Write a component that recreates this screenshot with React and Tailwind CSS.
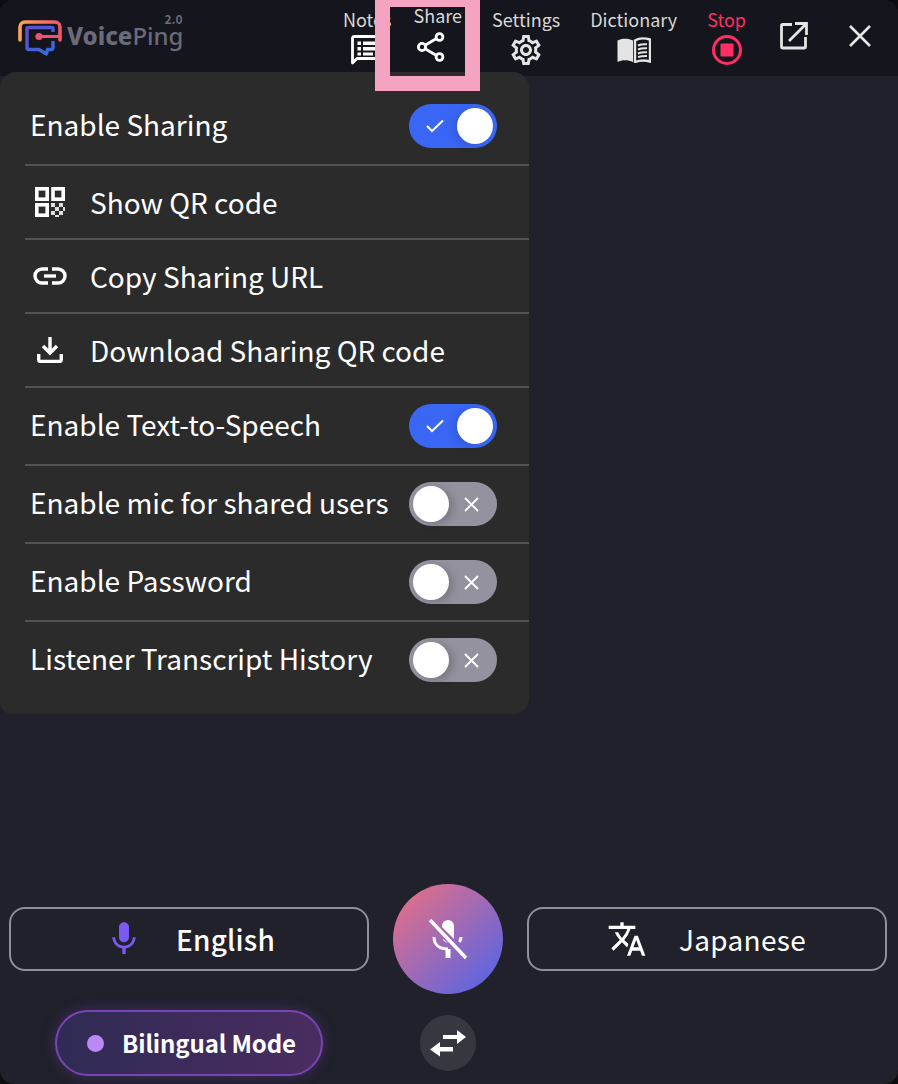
import React from "react";
import { MdOutlineSettings, MdTranslate, MdMic } from "react-icons/md";

const font = { fontFamily: '"Noto Sans CJK JP", "Noto Sans", sans-serif' };

function Logo() {
  return (
    <svg width="44" height="36" viewBox="0 0 44 36" fill="none">
      <defs>
        <linearGradient id="lg1" x1="0" y1="0" x2="44" y2="0" gradientUnits="userSpaceOnUse">
          <stop offset="0" stopColor="#fba94c" />
          <stop offset="1" stopColor="#f4506f" />
        </linearGradient>
        <linearGradient id="lg2" x1="6" y1="6" x2="30" y2="36" gradientUnits="userSpaceOnUse">
          <stop offset="0" stopColor="#6a48c8" />
          <stop offset="1" stopColor="#2f6fe0" />
        </linearGradient>
      </defs>
      <path d="M2 20V7a5 5 0 0 1 5-5h30a5 5 0 0 1 5 5v13" stroke="url(#lg1)" strokeWidth="3.600" strokeLinecap="round" />
      <path d="M35 21v7a1.500 1.500 0 0 1-1.500 1.500H29.500L28.500 34 21 29.500H10.500A1.500 1.500 0 0 1 9 28V9a1.500 1.500 0 0 1 1.500-1.500h23A1.500 1.500 0 0 1 35 9v3" stroke="url(#lg2)" strokeWidth="3.400" strokeLinejoin="round" />
      <path d="M22 16.500h20" stroke="#f4506f" strokeWidth="3.200" strokeLinecap="round" />
      <circle cx="21" cy="16.500" r="3.600" fill="#f4506f" />
    </svg>
  );
}

function NotesIcon() {
  return (
    <svg width="32" height="30" viewBox="0 0 32 30" fill="none">
      <path d="M1.500 28V3a1.500 1.500 0 0 1 1.500-1.500h27A1.500 1.500 0 0 1 31 3v19a1.500 1.500 0 0 1-1.500 1.500H6Z" stroke="#fff" strokeWidth="2.800" strokeLinejoin="round" />
      <path d="M6.500 6.500h3.500v3.500h-3.500zM6.500 12h3.500v3.500h-3.500zM6.500 17.500h3.500v3h-3.500zM12 6.500h14.500v3.500H12zM12 12h14.500v3.500H12zM12 17.500h10v3H12z" fill="#fff" />
    </svg>
  );
}

function ShareIcon() {
  return (
    <svg width="30" height="30" viewBox="0 0 30 30" fill="none" stroke="#fff" strokeWidth="2.800">
      <path d="M9.500 13 20.500 6.500M9.500 17 20.500 23.500" />
      <circle cx="6" cy="15" r="3.600" />
      <circle cx="23.500" cy="5" r="3.400" />
      <circle cx="23.500" cy="25" r="3.400" />
    </svg>
  );
}

function BookIcon() {
  return (
    <svg width="34" height="26" viewBox="0 0 34 26" fill="none">
      <path d="M0.500 3.500C5 1 11 1 16 3.500V25C11 22.500 5 22.500 0.500 25Z" fill="#e4e4e4" />
      <path d="M18 3.500C22 1 28 1 33 2.500V24.500C28 23 23 23 18 25Z" stroke="#e4e4e4" strokeWidth="2.400" />
      <path d="M21 8.500C24 7 27 7 30 7.200M21 12.500C24 11 27 11 30 11.200M21 16.500C24 15 27 15 30 15.200M21 20C24 19 27 19 30 19" stroke="#e4e4e4" strokeWidth="2" />
    </svg>
  );
}

function StopIcon() {
  return (
    <svg width="32" height="32" viewBox="0 0 32 32" fill="none">
      <circle cx="16" cy="16" r="13.500" stroke="#ff2e63" strokeWidth="3" />
      <rect x="9.500" y="9.500" width="13" height="13" rx="1" fill="#ff2e63" />
    </svg>
  );
}

function OpenIcon() {
  return (
    <svg width="28" height="28" viewBox="0 0 28 28" fill="none" stroke="#e4e4e4" strokeWidth="2.800">
      <path d="M12 2.500H2.500A1 1 0 0 0 1.500 3.500V25a1 1 0 0 0 1 1h22a1 1 0 0 0 1-1V15" />
      <path d="M9 19 25 3M15 1.500h11.500V13" />
    </svg>
  );
}

function CloseIcon() {
  return (
    <svg width="22" height="22" viewBox="0 0 22 22" fill="none" stroke="#e4e4e4" strokeWidth="2.600">
      <path d="M1 1l20 20M21 1 1 21" />
    </svg>
  );
}

function QrIcon() {
  return (
    <svg width="30" height="30" viewBox="0 0 30 30" fill="none">
      <g stroke="#fff" strokeWidth="3.600">
        <rect x="1.800" y="1.800" width="10.400" height="10.400" />
        <rect x="18" y="1.800" width="10.200" height="10.400" />
        <rect x="1.800" y="17.800" width="10.400" height="10.400" />
      </g>
      <path d="M16 16h4v4h-4zM24 16h4v4h-4zM20 20h4v4h-4zM16 24h4v4h-4zM24 24h4v4h-4zM28 20h2v4h-2zM20 28h4v2h-4z" fill="#fff" opacity="0.85" />
    </svg>
  );
}

function LinkIcon() {
  return (
    <svg width="34" height="18" viewBox="0 0 34 18" fill="none" stroke="#fff" strokeWidth="3.400">
      <path d="M15 2H9a7 7 0 0 0 0 14h6M19 2h6a7 7 0 0 1 0 14h-6" />
      <path d="M11 9h12" />
    </svg>
  );
}

function DownloadIcon() {
  return (
    <svg width="26" height="26" viewBox="0 0 26 26" fill="none" stroke="#fff" strokeWidth="3.400">
      <path d="M13 0v15M6 9l7 7 7-7" />
      <path d="M1.700 17v5.500a2 2 0 0 0 2 2h18.600a2 2 0 0 0 2-2V17" />
    </svg>
  );
}

function MicOffIcon() {
  return (
    <svg width="40" height="42" viewBox="0 0 40 42" fill="none">
      <path d="M14 8a6 6 0 0 1 12 0v13L14 9Z" fill="#fff" />
      <path d="M15 22a7 7 0 0 0 5 3l-5-4Z" fill="#fff" />
      <path d="M6 19c0 8 6 12 14 12M33 19c0 2-.6 3.600-1.500 5" stroke="#fff" strokeWidth="3" />
      <path d="M20 31v9" stroke="#fff" strokeWidth="5" />
      <path d="M2 2l36 38" stroke="#fff" strokeWidth="3.500" />
    </svg>
  );
}

function SwapIcon() {
  return (
    <svg width="36" height="28" viewBox="0 0 36 28" fill="#fff">
      <path d="M13 7h14V2l9 7-9 7v-5H13z" transform="translate(0,-1)" />
      <path d="M23 18H10v-5l-10 7.500 10 7v-5h13z" />
    </svg>
  );
}

function Toggle({ on }) {
  return (
    <div
      className={`relative flex h-[44px] w-[88px] shrink-0 items-center rounded-full ${on ? "justify-end bg-[#3a66f5] pr-[4px]" : "bg-[#94929f] pl-[4px]"}`}
    >
      {on ? (
        <svg className="absolute left-[17px] top-[15px]" width="18" height="14" viewBox="0 0 18 14" fill="none" stroke="#fff" strokeWidth="2">
          <path d="M1 7l5 5L17 1.500" />
        </svg>
      ) : (
        <svg className="absolute left-[55px] top-[15px]" width="15" height="15" viewBox="0 0 15 15" fill="none" stroke="#fff" strokeWidth="1.800">
          <path d="M1 1l13 13M14 1 1 14" />
        </svg>
      )}
      <div className={`h-[36px] w-[36px] rounded-full bg-white ${on ? "shadow-[-4px_2px_8px_rgba(0,0,0,0.12)]" : "shadow-[4px_2px_8px_rgba(0,0,0,0.2)]"}`} />
    </div>
  );
}

function NavItem({ label, children, className = "", labelClass = "h-[28px]", iconClass = "" }) {
  return (
    <div className={`flex flex-col items-center ${className}`}>
      <span className={`whitespace-nowrap text-[18px] leading-[26px] ${labelClass}`}>{label}</span>
      <div className={`flex h-[32px] items-center justify-center ${iconClass}`}>{children}</div>
    </div>
  );
}

function SwitchRow({ label, on, h, border = true }) {
  return (
    <div className={`ml-[25px] flex items-center justify-between pr-[32px] ${border ? "border-b-2 border-[#525252]" : ""} ${h}`}>
      <span className="ml-[5px] whitespace-nowrap pb-[4px] text-[28px] text-white">{label}</span>
      <Toggle on={on} />
    </div>
  );
}

function ActionRow({ label, icon }) {
  return (
    <div className="ml-[25px] flex h-[74px] items-center border-b-2 border-[#525252]">
      <div className="flex w-[50px] justify-center">{icon}</div>
      <span className="ml-[15px] whitespace-nowrap text-[28px] text-white">{label}</span>
    </div>
  );
}

function LangBox({ children, pad }) {
  return (
    <div className={`flex h-[64px] w-[360px] items-center rounded-[16px] border-2 border-[#8f8f95] ${pad}`}>
      {children}
    </div>
  );
}

export default function App() {
  return (
    <div className="h-[1084px] w-[898px] bg-[#0d0d11]">
      <div style={font} className="relative flex h-[1084px] w-[898px] flex-col overflow-hidden rounded-[14px] bg-[#20212b] text-[#d8d8d8]">
        <header className="flex h-[76px] shrink-0 items-start bg-[#14151d]">
          <div className="flex w-[343px] shrink-0 pl-[18px] pt-[20px]">
            <Logo />
            <div className="relative ml-[5px] mt-[4px]">
              <div className="text-[24px] leading-[24px] text-[#6a6a78]" style={{ fontFamily: '"Noto Sans", sans-serif' }}>
                <b className="font-extrabold">Voice</b><span className="font-medium">Ping</span>
              </div>
              <span className="absolute right-[1px] top-[-10px] text-[12px] font-bold leading-[10px] text-[#6a6a78]">2.0</span>
            </div>
          </div>
          <nav className="flex gap-[30px] pt-[6px]">
            <NavItem label="Notes" className="mr-[-9px]"><NotesIcon /></NavItem>
            <NavItem label="Share" className="ml-[1px]" labelClass="-mt-[4px] h-[29px]" iconClass="mr-[14px]"><ShareIcon /></NavItem>
            <NavItem label="Settings"><MdOutlineSettings size={36} color="#e4e4e4" /></NavItem>
            <NavItem label="Dictionary"><BookIcon /></NavItem>
            <NavItem label="Stop" labelClass="h-[28px] text-[#ff2e63]"><StopIcon /></NavItem>
          </nav>
          <div className="ml-[34px] mt-[22px]"><OpenIcon /></div>
          <div className="ml-[41px] mt-[25px]"><CloseIcon /></div>
        </header>

        <div className="flex-1" />

        <div className="flex items-start justify-between pl-[9px] pr-[11px]">
          <div className="mt-[23px]">
            <LangBox pad="pl-[93px]">
              <MdMic size={40} color="#7a5af5" />
              <span className="ml-[32px] text-[28px] font-medium tracking-[0.2px] text-white">English</span>
            </LangBox>
          </div>
          <div className="flex h-[110px] w-[110px] items-center justify-center rounded-full bg-linear-to-br/srgb from-[#f0707f] to-[#4a63ee]">
            <MicOffIcon />
          </div>
          <div className="mt-[23px]">
            <LangBox pad="pl-[78px]">
              <MdTranslate size={40} color="#fff" />
              <span className="ml-[32px] text-[28px] tracking-[0.3px] text-white">Japanese</span>
            </LangBox>
          </div>
        </div>

        <div className="flex h-[90px] items-start pt-[21px]">
          <div className="-mt-[5px] ml-[55px] flex h-[66px] w-[268px] items-center rounded-full border-2 border-[#7b44b4] bg-gradient-to-r from-[#2f2b55] to-[#4a2c60] pl-[30px] shadow-[0_0_14px_rgba(130,70,200,0.35)]">
            <div className="h-[17px] w-[17px] rounded-full bg-[#b98af5]" />
            <span className="ml-[18px] whitespace-nowrap text-[24px] font-bold tracking-[-0.12px] text-white">Bilingual Mode</span>
          </div>
          <div className="ml-[97px] flex h-[56px] w-[56px] items-center justify-center rounded-full bg-[#36373f]">
            <SwapIcon />
          </div>
        </div>

        <div className="absolute left-0 top-[72px] h-[642px] w-[529px] rounded-[16px] rounded-bl-[12px] bg-[#2b2b2b]">
          <SwitchRow label="Enable Sharing" on h="h-[94px] pt-[16px]" />
          <ActionRow label="Show QR code" icon={<QrIcon />} />
          <ActionRow label="Copy Sharing URL" icon={<LinkIcon />} />
          <ActionRow label="Download Sharing QR code" icon={<DownloadIcon />} />
          <SwitchRow label="Enable Text-to-Speech" on h="h-[78px]" />
          <SwitchRow label="Enable mic for shared users" h="h-[78px]" />
          <SwitchRow label="Enable Password" h="h-[78px]" />
          <SwitchRow label="Listener Transcript History" h="h-[76px]" border={false} />
        </div>

        <div className="absolute left-[375px] top-[-8px] h-[99px] w-[105px] border-[15px] border-[#f4a4c0]" />
      </div>
    </div>
  );
}
